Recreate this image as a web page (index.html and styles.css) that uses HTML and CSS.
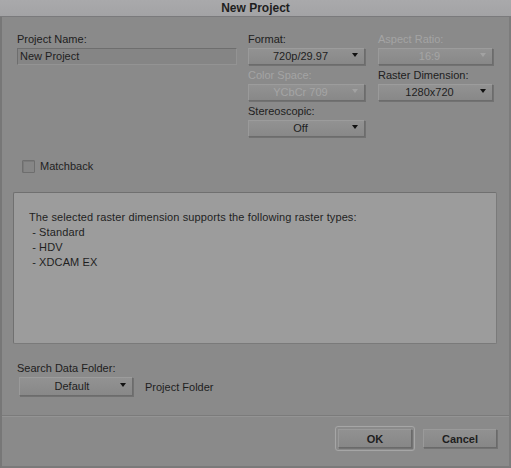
FILE: index.html
```html
<!DOCTYPE html>
<html>
<head>
<meta charset="utf-8">
<link rel="stylesheet" href="styles.css">
</head>
<body>
<div class="dialog">
  <div class="titlebar">New Project</div>
  <div class="body">
    <div class="fields">
      <div class="field name">
        <div class="label">Project Name:</div>
        <div class="input">New Project</div>
      </div>
      <div class="col">
        <div class="field">
          <div class="label">Format:</div>
          <div class="select"><span>720p/29.97</span><i class="arrow"></i></div>
        </div>
        <div class="field">
          <div class="label disabled">Color Space:</div>
          <div class="select disabled"><span>YCbCr 709</span><i class="arrow"></i></div>
        </div>
        <div class="field">
          <div class="label">Stereoscopic:</div>
          <div class="select"><span>Off</span><i class="arrow"></i></div>
        </div>
      </div>
      <div class="col">
        <div class="field">
          <div class="label disabled">Aspect Ratio:</div>
          <div class="select disabled"><span>16:9</span><i class="arrow"></i></div>
        </div>
        <div class="field">
          <div class="label">Raster Dimension:</div>
          <div class="select"><span>1280x720</span><i class="arrow"></i></div>
        </div>
      </div>
    </div>
    <label class="check"><span class="box"></span>Matchback</label>
    <div class="info">
      <p>The selected raster dimension supports the following raster types:</p>
      <p>&nbsp;- Standard</p>
      <p>&nbsp;- HDV</p>
      <p>&nbsp;- XDCAM EX</p>
    </div>
    <div class="search">
      <div class="label">Search Data Folder:</div>
      <div class="search-row">
        <div class="select wide"><span>Default</span><i class="arrow"></i></div>
        <span class="plain">Project Folder</span>
      </div>
    </div>
  </div>
  <div class="footer">
    <div class="btn-wrap default"><button class="btn">OK</button></div>
    <div class="btn-wrap"><button class="btn">Cancel</button></div>
  </div>
</div>
</body>
</html>
```

FILE: styles.css
```css
html, body {
  margin: 0;
  padding: 0;
  background: #8a8a8a;
}
body {
  font-family: "Liberation Sans", Arial, sans-serif;
  font-size: 11px;
  color: #222;
}
.dialog {
  width: 511px;
  height: 468px;
  box-sizing: border-box;
  background: #8a8a8a;
  border-left: 2px solid #777;
  border-right: 2px solid #7c7c7c;
  border-bottom: 2px solid #7a7a7a;
  display: flex;
  flex-direction: column;
}
.titlebar {
  height: 16px;
  line-height: 17px;
  background: linear-gradient(#a9a9ab, #a3a3a5);
  border-bottom: 1px solid #7a7a7c;
  text-align: center;
  font-weight: bold;
  font-size: 12px;
  color: #1e1e1e;
  margin-left: -2px;
  margin-right: -2px;
}
.body {
  padding: 16px 11px 0 11px;
  flex: 1;
}
.fields {
  display: grid;
  grid-template-columns: 220px 117px 117px;
  column-gap: 11px;
  padding-left: 4px;
}
.fields .col:last-child {
  margin-left: 2px;
}
.col {
  display: flex;
  flex-direction: column;
  gap: 4px;
}
.label {
  height: 15px;
  line-height: 13px;
  color: #202020;
}
.label.disabled {
  color: #a4a4a4;
}
.input {
  height: 17px;
  box-sizing: border-box;
  line-height: 15px;
  padding-left: 2px;
  background: #858585;
  border: 1px solid #6e6e6e;
  border-bottom-color: #939393;
  border-right-color: #939393;
  color: #1e1e1e;
}
.select {
  position: relative;
  height: 17px;
  box-sizing: border-box;
  line-height: 15px;
  text-align: center;
  background: linear-gradient(#929292, #888888);
  border: 1px solid #6c6c6c;
  border-top-color: #9c9c9c;
  border-left-color: #9a9a9a;
  box-shadow: 1px 1px 0 #727272;
  color: #1e1e1e;
  padding-right: 12px;
}
.select.disabled {
  color: #a5a5a5;
}
.arrow {
  position: absolute;
  right: 6px;
  top: 4px;
  width: 0;
  height: 0;
  border-left: 3.5px solid transparent;
  border-right: 3.5px solid transparent;
  border-top: 4px solid #111;
}
.select.disabled .arrow {
  border-top-color: #a2a2a2;
}
.check {
  display: flex;
  align-items: center;
  margin: 22px 0 0 9px;
  height: 14px;
}
.box {
  width: 11px;
  height: 11px;
  border: 1px solid #6e6e6e;
  background: #868686;
  box-shadow: inset 1px 1px 0 #7a7a7a;
  margin-right: 5px;
  border-radius: 1px;
}
.info {
  margin: 19px 1px 0 0;
  height: 152px;
  box-sizing: border-box;
  background: #9c9c9c;
  border: 1px solid #707070;
  border-right-color: #7a7a7a;
  border-bottom-color: #7a7a7a;
  border-radius: 2px;
  padding: 17px 15px;
  color: #1f1f1f;
  font-size: 11px;
  letter-spacing: 0.11px;
}
.info p {
  margin: 0;
  line-height: 15px;
}
.search {
  margin: 17px 0 0 4px;
}
.search .label {
  height: 16px;
  line-height: 15px;
}
.search-row {
  display: flex;
  align-items: center;
  gap: 12px;
}
.select.wide {
  width: 114px;
  height: 19px;
  line-height: 17px;
  margin-left: 2px;
  padding-right: 8px;
}
.select.wide .arrow {
  top: 5px;
}
.plain {
  color: #1e1e1e;
  margin-top: 1px;
}
.footer {
  height: 51px;
  box-sizing: border-box;
  border-top: 1px solid #7b7b7b;
  box-shadow: inset 0 1px 0 #949494;
  display: flex;
  justify-content: flex-end;
  align-items: flex-start;
  gap: 5px;
  padding: 10px 9px 0 0;
}
.btn-wrap {
  padding: 3px;
}
.btn-wrap.default {
  padding: 2px;
  border: 1px solid #a6a6a6;
  border-radius: 3px;
  box-shadow: 0 0 1px #9a9a9a;
}
.btn {
  display: block;
  width: 74px;
  height: 19px;
  margin: 0;
  padding: 0;
  font-family: "Liberation Sans", Arial, sans-serif;
  font-size: 11px;
  font-weight: bold;
  color: #1e1e1e;
  background: linear-gradient(#919191, #878787);
  border: 1px solid #6a6a6a;
  border-top-color: #9a9a9a;
  border-left-color: #9a9a9a;
  box-shadow: 1px 1px 0 #737373;
}
```
